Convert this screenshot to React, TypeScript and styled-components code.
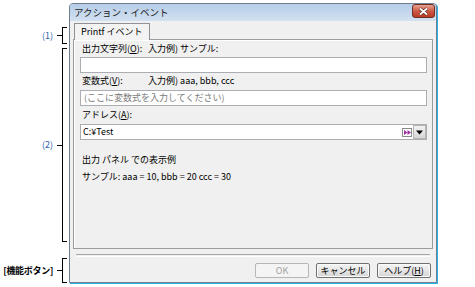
import React from "react";
import styled, { createGlobalStyle } from "styled-components";

const Global = createGlobalStyle`
  html, body {
    margin: 0;
    padding: 0;
    background: #ffffff;
  }
  body {
    font-family: "Noto Sans CJK JP", "Noto Sans", sans-serif;
    font-size: 9px;
    color: #000;
  }
`;

const Page = styled.div`
  display: flex;
  width: 475px;
  height: 287px;
  overflow: hidden;
`;

const Notes = styled.div`
  display: flex;
  flex-direction: column;
  width: 69px;
  flex-shrink: 0;
`;

const Note = styled.div<{ $top: number; $h: number }>`
  display: flex;
  align-items: center;
  justify-content: flex-end;
  width: 67px;
  height: ${(p) => p.$h}px;
  margin-top: ${(p) => p.$top}px;
`;

const NoteLabel = styled.span<{ $blue?: boolean }>`
  margin-right: 4px;
  line-height: 12px;
  color: ${(p) => (p.$blue ? "#2c5fb0" : "#000")};
  font-weight: ${(p) => (p.$blue ? 400 : 700)};
  letter-spacing: ${(p) => (p.$blue ? "0" : "-0.3px")};
`;

const Dash = styled.span`
  width: 5px;
  height: 1px;
  background: #000;
`;

const Bracket = styled.span`
  box-sizing: border-box;
  width: 5px;
  height: 100%;
  border: 1px solid #000;
  border-right: none;
`;

const Dialog = styled.div`
  box-sizing: border-box;
  display: flex;
  flex-direction: column;
  width: 368px;
  height: 280px;
  margin-top: 3px;
  background: #f0f0f0;
  border: 1px solid #6f7f92;
  border-radius: 4px 4px 0 0;
  box-shadow: 1px 1px 0 #2bb3e8;
`;

const TitleBar = styled.div`
  display: flex;
  align-items: flex-start;
  justify-content: space-between;
  height: 17px;
  padding: 0 1px 0 4px;
  background: linear-gradient(#b6cde8, #d3e1f1);
  border-radius: 3px 3px 0 0;
`;

const Title = styled.span`
  font-size: 9.5px;
  line-height: 17px;
  color: #1b1b1b;
`;

const CloseButton = styled.div`
  box-sizing: border-box;
  display: flex;
  align-items: center;
  justify-content: center;
  width: 23px;
  height: 14px;
  margin-top: 0;
  border: 1px solid #6e2f24;
  border-radius: 3px;
  background: linear-gradient(#e6a391, #cd5a45 50%, #b93a24);
`;

const Body = styled.div`
  display: flex;
  flex-direction: column;
  flex: 1;
  padding: 2px 3px 5px 3px;
`;

const TabStrip = styled.div`
  display: flex;
  padding-left: 1px;
`;

const Tab = styled.div`
  box-sizing: border-box;
  height: 17px;
  padding: 0 6px;
  margin-bottom: -1px;
  line-height: 15px;
  background: #f3f3f3;
  border: 1px solid #8e9197;
  border-bottom: none;
  position: relative;
  z-index: 1;
`;

const Panel = styled.div`
  box-sizing: border-box;
  display: flex;
  flex-direction: column;
  height: 210px;
  padding: 0 5px 0 6px;
  border: 1px solid #9a9ca1;
  box-shadow: inset 1px 1px 0 #ffffff;
  background: #f0f0f0;
`;

const LabelRow = styled.div<{ $top: number }>`
  display: flex;
  height: 12px;
  line-height: 12px;
  padding-left: 2px;
  margin-top: ${(p) => p.$top}px;
  white-space: nowrap;
`;

const LabelName = styled.span`
  width: 66px;
`;

const Key = styled.span`
  text-decoration: underline;
`;

const TextBox = styled.div<{ $top: number; $placeholder?: boolean }>`
  box-sizing: border-box;
  height: 16px;
  margin-top: ${(p) => p.$top}px;
  padding-left: 3px;
  line-height: 14px;
  background: #fff;
  border: 1px solid #abadb3;
  color: ${(p) => (p.$placeholder ? "#7a7a7a" : "#000")};
`;

const Combo = styled.div`
  box-sizing: border-box;
  display: flex;
  align-items: center;
  height: 16px;
  margin-top: 3px;
  padding-left: 2px;
  background: #fff;
  border: 1px solid #abadb3;
`;

const ComboText = styled.span`
  flex: 1;
  line-height: 14px;
`;

const MacroIcon = styled.div`
  box-sizing: border-box;
  display: flex;
  align-items: center;
  justify-content: center;
  width: 10px;
  height: 9px;
  margin-right: 1px;
  border: 1px solid #8a8a8a;
  background: #fff;
`;

const DropButton = styled.div`
  box-sizing: border-box;
  display: flex;
  align-items: center;
  justify-content: center;
  width: 13px;
  height: 14px;
  border: 1px solid #b5b5b5;
  background: linear-gradient(#f2f2f2, #d6d6d6);
`;

const Separator = styled.div`
  height: 1px;
  margin: 5px 3px 0 3px;
  border-top: 1px solid #a7a7a7;
  border-bottom: 1px solid #ffffff;
`;

const ButtonRow = styled.div`
  display: flex;
  justify-content: flex-end;
  gap: 7px;
  margin-top: 6px;
  padding-right: 2px;
`;

const Button = styled.div<{ $disabled?: boolean }>`
  box-sizing: border-box;
  width: 54px;
  height: 15px;
  line-height: 13px;
  text-align: center;
  border-radius: 2px;
  border: 1px solid ${(p) => (p.$disabled ? "#b4b6b9" : "#707070")};
  background: ${(p) =>
    p.$disabled ? "#f4f4f4" : "linear-gradient(#f4f4f4, #e6e6e6 50%, #d5d5d5)"};
  color: ${(p) => (p.$disabled ? "#a3a3a3" : "#000")};
  box-shadow: ${(p) => (p.$disabled ? "none" : "inset 0 0 0 1px #fbfbfb")};
`;

export default function App() {
  return (
    <Page>
      <Global />
      <Notes>
        <Note $top={27} $h={17}>
          <NoteLabel $blue>(1)</NoteLabel>
          <Dash />
          <Bracket />
        </Note>
        <Note $top={4} $h={194}>
          <NoteLabel $blue>(2)</NoteLabel>
          <Dash />
          <Bracket />
        </Note>
        <Note $top={16} $h={25}>
          <NoteLabel>[機能ボタン]</NoteLabel>
          <Dash />
          <Bracket />
        </Note>
      </Notes>
      <Dialog>
        <TitleBar>
          <Title>アクション・イベント</Title>
          <CloseButton>
            <svg width="11" height="9" viewBox="0 0 11 9">
              <path d="M2 1.5 L9 7.5 M9 1.5 L2 7.5" stroke="#5a2a22" strokeWidth="3.2" />
              <path d="M2 1.5 L9 7.5 M9 1.5 L2 7.5" stroke="#ffffff" strokeWidth="1.8" />
            </svg>
          </CloseButton>
        </TitleBar>
        <Body>
          <TabStrip>
            <Tab>Printf イベント</Tab>
          </TabStrip>
          <Panel>
            <LabelRow $top={3}>
              <LabelName>
                出力文字列(<Key>O</Key>):
              </LabelName>
              <span>入力例) サンプル:</span>
            </LabelRow>
            <TextBox $top={2} />
            <LabelRow $top={2}>
              <LabelName>
                変数式(<Key>V</Key>):
              </LabelName>
              <span>入力例) aaa, bbb, ccc</span>
            </LabelRow>
            <TextBox $top={3} $placeholder>
              (ここに変数式を入力してください)
            </TextBox>
            <LabelRow $top={3}>
              <span>
                アドレス(<Key>A</Key>):
              </span>
            </LabelRow>
            <Combo>
              <ComboText>C:¥Test</ComboText>
              <MacroIcon>
                <svg width="7" height="5" viewBox="0 0 7 5">
                  <path d="M0 0 L3.5 2.5 L0 5 Z M3.5 0 L7 2.5 L3.5 5 Z" fill="#9b2f9b" />
                </svg>
              </MacroIcon>
              <DropButton>
                <svg width="7" height="5" viewBox="0 0 7 5">
                  <path d="M0 0.5 H7 L3.5 4.5 Z" fill="#000" />
                </svg>
              </DropButton>
            </Combo>
            <LabelRow $top={14}>
              <span>出力 パネル での表示例</span>
            </LabelRow>
            <LabelRow $top={5}>
              <span>サンプル: aaa = 10, bbb = 20 ccc = 30</span>
            </LabelRow>
          </Panel>
          <Separator />
          <ButtonRow>
            <Button $disabled>OK</Button>
            <Button>キャンセル</Button>
            <Button>
              ヘルプ(<Key>H</Key>)
            </Button>
          </ButtonRow>
        </Body>
      </Dialog>
    </Page>
  );
}
